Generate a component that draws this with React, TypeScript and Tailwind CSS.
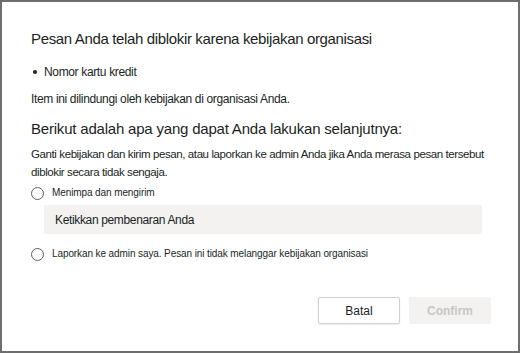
import React, { useState } from "react"

const font = { fontFamily: '"Liberation Sans", Arial, sans-serif' }

type RadioProps = {
  label: string;
  checked: boolean;
  onSelect: () => void;
};

const Radio: React.FC<RadioProps> = ({ label, checked, onSelect }) => (
  <button type="button" onClick={onSelect} className="flex items-center gap-[8px] text-left">
    <span className="flex h-[13px] w-[13px] items-center justify-center rounded-full border border-[#605e5c] bg-white">
      {checked && <span className="h-[7px] w-[7px] rounded-full bg-[#323130]" />}
    </span>
    <span className="text-[10px] leading-[14px] tracking-[-0.1px] text-[#201f1e]">{label}</span>
  </button>
)

export default function App() {
  const [choice, setChoice] = useState<"override" | "report" | null>(null)
  const [reason, setReason] = useState("")

  return (
    <div style={font} className="h-[353px] w-[520px] bg-white">
      <div className="flex h-full flex-col border-2 border-[#6d6d6d] pl-[29px] pr-[27px] text-[#201f1e]">
        <h1 className="mt-[27px] text-[15px] leading-[20px] tracking-[-0.35px]">
          Pesan Anda telah diblokir karena kebijakan organisasi
        </h1>

        <ul className="mt-[15px] flex flex-col">
          <li className="flex items-center gap-[7px] pl-[2px] text-[12px] leading-[16px] tracking-[-0.35px]">
            <span className="h-[4px] w-[4px] rounded-full bg-[#201f1e]" />
            Nomor kartu kredit
          </li>
        </ul>

        <p className="mt-[11px] text-[12px] leading-[16px] tracking-[-0.35px]">
          Item ini dilindungi oleh kebijakan di organisasi Anda.
        </p>

        <h2 className="mt-[11px] text-[15px] leading-[22px] tracking-[-0.2px]">
          Berikut adalah apa yang dapat Anda lakukan selanjutnya:
        </h2>

        <p className="mt-[5px] text-[11.5px] leading-[18px] tracking-[-0.4px]">
          Ganti kebijakan dan kirim pesan, atau laporkan ke admin Anda jika Anda merasa pesan tersebut diblokir secara tidak sengaja.
        </p>

        <div className="mt-[5px]">
          <Radio label="Menimpa dan mengirim" checked={choice === "override"} onSelect={() => setChoice("override")} />
        </div>

        <div className="ml-[13px] mr-[9px] mt-[5px]">
          <input
            value={reason}
            onChange={(e) => setReason(e.target.value)}
            placeholder="Ketikkan pembenaran Anda"
            className="h-[29px] w-full rounded-[2px] bg-[#f3f2f1] px-[11px] text-[12px] tracking-[-0.35px] text-[#201f1e] outline-none placeholder:text-[#201f1e]"
          />
        </div>

        <div className="mt-[13px]">
          <Radio
            label="Laporkan ke admin saya. Pesan ini tidak melanggar kebijakan organisasi"
            checked={choice === "report"}
            onSelect={() => setChoice("report")}
          />
        </div>

        <div className="mt-auto mb-[27px] flex justify-end gap-[9px]">
          <button className="h-[27px] w-[82px] rounded-[2px] border border-[#d1d1d1] bg-white text-[12px] text-[#201f1e] shadow-[0_1px_2px_rgba(0,0,0,0.08)]">
            Batal
          </button>
          <button disabled className="h-[27px] w-[82px] rounded-[2px] bg-[#f3f2f1] text-[12px] font-semibold text-[#c8c6c4]">
            Confirm
          </button>
        </div>
      </div>
    </div>
  )
}
